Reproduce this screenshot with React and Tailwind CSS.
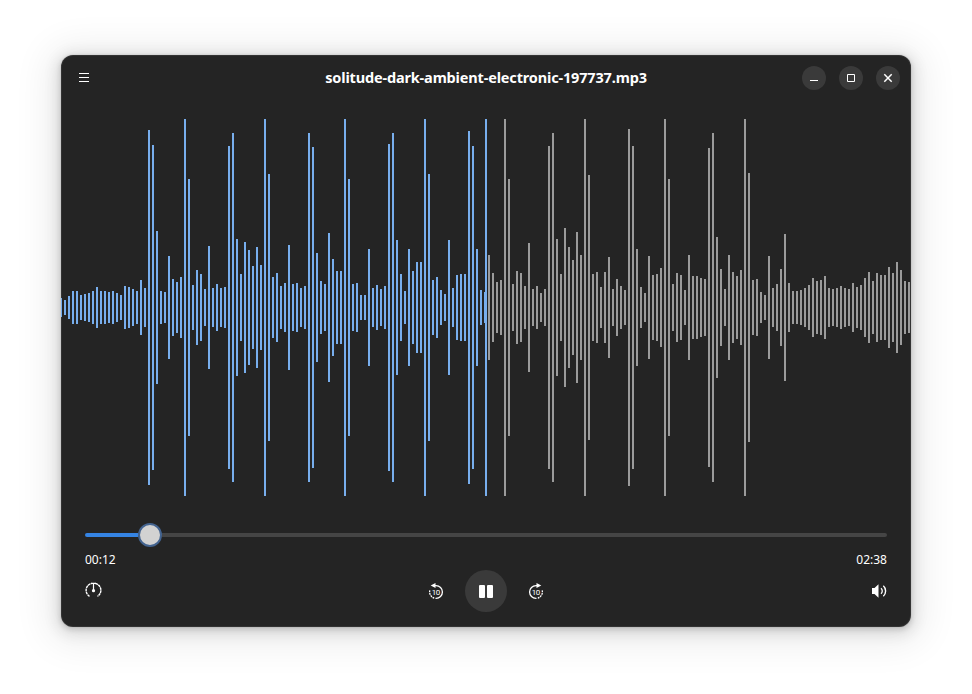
// App.jsx

import React from 'react';

// Full height of every bar in px, one bar each 4px
const PEAKS = [
  19, 15, 23, 33, 33, 25, 27, 29, 33, 41, 33, 33, 31, 33, 29, 25, 43, 41, 37, 33,
  55, 39, 355, 325, 153, 33, 31, 103, 57, 51, 61, 377, 257, 45, 75, 67, 37, 123, 39, 47,
  39, 41, 323, 349, 137, 67, 131, 115, 83, 121, 85, 377, 267, 61, 69, 43, 49, 125, 47, 49,
  39, 43, 349, 321, 109, 53, 47, 149, 97, 73, 73, 377, 257, 47, 49, 25, 25, 117, 39, 45,
  37, 43, 327, 349, 135, 67, 33, 117, 73, 91, 91, 377, 267, 55, 61, 35, 27, 135, 39, 65,
  67, 67, 353, 323, 117, 35, 31, 105, 69, 51, 55, 377, 257, 47, 73, 69, 43, 129, 37, 43,
  29, 37, 323, 349, 137, 67, 159, 121, 95, 151, 105, 377, 265, 67, 71, 41, 71, 101, 37, 57,
  43, 35, 357, 323, 117, 41, 29, 103, 65, 67, 79, 377, 257, 47, 69, 65, 35, 105, 63, 63,
  59, 57, 319, 349, 141, 77, 37, 105, 71, 63, 75, 377, 269, 55, 57, 31, 25, 103, 39, 47,
  77, 147, 49, 33, 33, 35, 39, 45, 59, 53, 55, 63, 39, 37, 39, 43, 39, 37, 49, 41,
  45, 59, 71, 53, 69, 65, 65, 81, 69, 91, 75, 53, 51,
];

const PLAYED = 107;

const Waveform = () => (
  <svg width="850" height="377" viewBox="0 0 850 377" shapeRendering="crispEdges" className="block">
    {PEAKS.map((h, i) => (
      <rect
        key={i}
        x={i * 4 - 1}
        y={(377 - h) / 2}
        width="2"
        height={h}
        className={i < PLAYED ? 'fill-[#78aeed]' : 'fill-[#9b9b9b]'}
      />
    ))}
    <rect x="424" y="0" width="2" height="377" className="fill-[#78aeed]" />
  </svg>
);

const WindowButton = ({ label, children }) => (
  <button aria-label={label} className="flex size-6 items-center justify-center rounded-full bg-[#3a3a3a]">
    <svg width="16" height="16" viewBox="0 0 16 16" fill="none" stroke="currentColor">
      {children}
    </svg>
  </button>
);

const SkipIcon = ({ forward }) => (
  <svg width="16" height="18" viewBox="0 0 16 18" fill="none" className="block">
    <g transform={forward ? undefined : 'translate(16 0) scale(-1 1)'}>
      <path d="M9 3.600H8A6.400 6.400 0 0 0 8 16.400H8.500" stroke="currentColor" strokeWidth="1.300" />
      <path d="M9.800 16.100A6.400 6.400 0 0 0 14 7.800" stroke="currentColor" strokeWidth="1.300" strokeDasharray="1.800 0.800" />
      <path d="M8.500 1 13.300 3.600 8.500 6Z" fill="currentColor" />
    </g>
    <text
      x="7.800"
      y="13"
      textAnchor="middle"
      fill="currentColor"
      className="font-['Roboto',sans-serif] text-[8px] tracking-[-0.4px]"
    >
      10
    </text>
  </svg>
);

const App = () => {
  return (
    <div className="flex h-[694px] w-[972px] justify-center overflow-hidden bg-white pt-[55px] font-['Noto_Sans',sans-serif] text-white">
      <div className="flex h-[572px] w-[850px] flex-col overflow-hidden rounded-xl bg-[#242424] shadow-[inset_0_0_0_1px_rgba(255,255,255,0.07),0_0_0_1px_rgba(0,0,0,0.03),0_2px_5px_1px_rgba(0,0,0,0.12),0_3px_14px_5px_rgba(0,0,0,0.09),0_4px_36px_14px_rgba(0,0,0,0.07)]">
        {/* Header bar */}
        <header className="grid h-[46px] grid-cols-[1fr_auto_1fr] items-center pr-[11px] pl-[18px]">
          <button aria-label="Menu" className="mb-px flex w-[10px] flex-col gap-[3px]">
            <span className="h-px w-full bg-white" />
            <span className="h-px w-full bg-white" />
            <span className="h-px w-full bg-white" />
          </button>
          <h1 className="mb-0.5 pr-[7px] text-[14.5px] leading-5 font-bold tracking-[-0.16px]">
            solitude-dark-ambient-electronic-197737.mp3
          </h1>
          <div className="flex justify-end gap-[13px]">
            <WindowButton label="Minimize">
              <path d="M4 10.5h8" />
            </WindowButton>
            <WindowButton label="Maximize">
              <path d="M4.5 4.5h7v7h-7z" />
            </WindowButton>
            <WindowButton label="Close">
              <path d="m4.3 4.3 7.4 7.4m0-7.4-7.4 7.4" strokeWidth="1.5" />
            </WindowButton>
          </div>
        </header>

        <div className="mt-[18px]">
          <Waveform />
        </div>

        {/* Seek bar */}
        <div className="mx-6 mt-[27px] flex h-6 items-center">
          <div className="h-1 w-[53px] rounded-l-full bg-[#3584e4]" />
          <div className="size-6 rounded-full border-2 border-[#43638f] bg-[#d2d2d2]" />
          <div className="h-1 flex-1 rounded-r-full bg-[#454545]" />
        </div>

        <div className="mx-6 mt-1 flex h-[18px] items-center justify-between text-xs">
          <span>00:12</span>
          <span>02:38</span>
        </div>

        {/* Controls */}
        <div className="mx-6 mt-[1px] grid h-[42px] grid-cols-3 items-center">
          <button aria-label="Playback speed" className="mb-0.5 justify-self-start">
            <svg width="17" height="16" viewBox="0 0 17 16" fill="none" stroke="currentColor" className="block">
              <path d="M4.500 14.300A7 7 0 0 1 6.500 1.500M10.500 1.500A7 7 0 0 1 12.500 14.300" strokeWidth="1.400" strokeDasharray="2.600 0.500" />
              <path d="M6 1.300h5" strokeWidth="1.200" />
              <path d="M8.500 1.500V8" strokeWidth="1.200" />
              <circle cx="8.500" cy="8.700" r="1.600" fill="currentColor" stroke="none" />
            </svg>
          </button>
          <div className="flex items-center justify-center gap-[21px]">
            <button aria-label="Back 10 seconds">
              <SkipIcon />
            </button>
            <button aria-label="Pause" className="flex size-[42px] items-center justify-center gap-0.5 rounded-full bg-[#3a3a3a]">
              <span className="h-[13px] w-[6px] rounded-[1px] bg-white" />
              <span className="h-[13px] w-[6px] rounded-[1px] bg-white" />
            </button>
            <button aria-label="Forward 10 seconds">
              <SkipIcon forward />
            </button>
          </div>
          <button aria-label="Volume" className="justify-self-end">
            <svg width="16" height="16" viewBox="0 0 16 16" fill="none" className="block">
              <path d="M1 5h2.500L7.500 1.300v13.400L3.500 11H1Z" fill="currentColor" />
              <path d="M10 5.300a3.500 3.500 0 0 1 0 5.400" stroke="currentColor" strokeWidth="1.300" />
              <path d="M12.300 2.800a7 7 0 0 1 0 10.400" stroke="currentColor" strokeWidth="1.400" />
            </svg>
          </button>
        </div>
      </div>
    </div>
  );
};

export default App;
